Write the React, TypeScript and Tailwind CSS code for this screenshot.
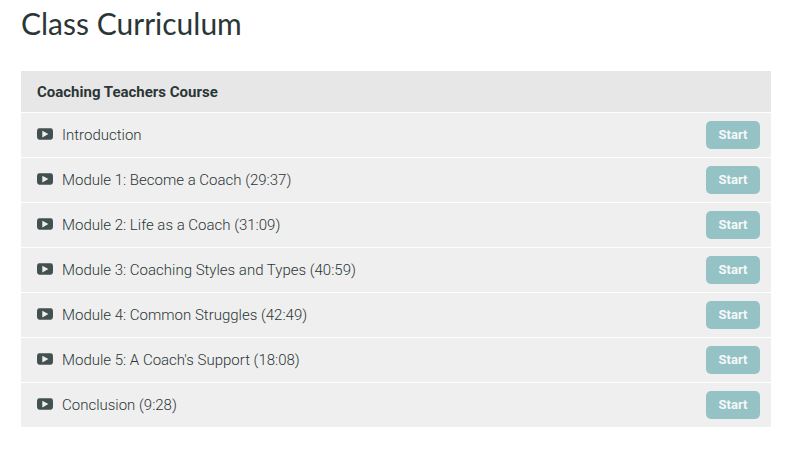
import React from "react";

type Lecture = {
  id: number;
  title: string;
  duration?: string;
};

type LectureRowProps = {
  lecture: Lecture;
};

const lectures: Lecture[] = [
  { id: 1, title: "Introduction" },
  { id: 2, title: "Module 1: Become a Coach", duration: "29:37" },
  { id: 3, title: "Module 2: Life as a Coach", duration: "31:09" },
  { id: 4, title: "Module 3: Coaching Styles and Types", duration: "40:59" },
  { id: 5, title: "Module 4: Common Struggles", duration: "42:49" },
  { id: 6, title: "Module 5: A Coach's Support", duration: "18:08" },
  { id: 7, title: "Conclusion", duration: "9:28" },
];

const VideoIcon = () => (
  <svg
    viewBox="0 0 16 12"
    className="mb-0.5 h-3 w-4 shrink-0"
    aria-hidden="true"
  >
    <path
      d="M2.2.3Q8 0 13.8.3 15.7.4 15.9 2.4 16.1 6 15.9 9.6 15.7 11.6 13.8 11.7 8 12 2.2 11.7.3 11.6.1 9.6-.1 6 .1 2.4.3.4 2.2.3Z"
      fill="#425150"
    />
    <path d="M5.3 2.7 11.4 6 5.3 9.4Z" fill="#efefef" />
  </svg>
);

const LectureRow = ({ lecture }: LectureRowProps) => {
  const label = lecture.duration
    ? `${lecture.title} (${lecture.duration})`
    : lecture.title;

  return (
    <li className="flex h-11 items-center justify-between bg-[#efefef] pr-[11px] pl-4">
      <div className="flex items-center gap-[9px]">
        <VideoIcon />
        <span className="text-[15px] leading-5 font-light text-[#2b3636]">
          {label}
        </span>
      </div>
      <button
        type="button"
        aria-label={`Start ${lecture.title}`}
        className="h-7 w-[54px] cursor-pointer rounded-[5px] bg-[#95c2c5] text-[13px] leading-4 font-bold text-[#f4f9f9]"
      >
        Start
      </button>
    </li>
  );
};

export default function App() {
  return (
    <main className="min-h-screen bg-white pt-[3px] pr-[27px] pb-6 pl-[21px] font-['Roboto',sans-serif]">
      <h1 className="font-['Lato',sans-serif] text-[30px] leading-10 text-[#2b3636]">
        Class Curriculum
      </h1>
      <section className="mt-7">
        <h2 className="bg-[#e7e7e7] px-4 pt-[11px] pb-[10px] text-[15px] leading-5 font-bold text-[#2b3636]">
          Coaching Teachers Course
        </h2>
        <ul className="mt-px flex flex-col gap-px">
          {lectures.map((lecture) => (
            <LectureRow key={lecture.id} lecture={lecture} />
          ))}
        </ul>
      </section>
    </main>
  );
}
